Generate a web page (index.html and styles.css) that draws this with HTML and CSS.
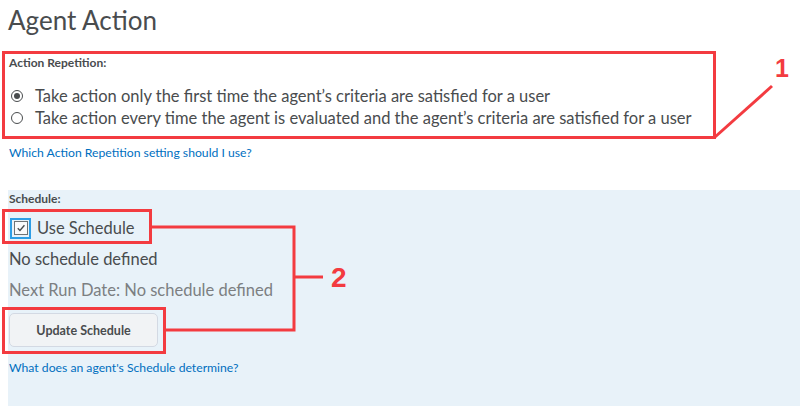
FILE: index.html
```html
<!DOCTYPE html>
<html lang="en">
<head>
<meta charset="utf-8">
<title>Agent Action</title>
<link rel="stylesheet" href="styles.css">
</head>
<body>
<div class="page">
  <h1 class="title">Agent Action</h1>

  <section class="repetition">
    <div class="label">Action Repetition:</div>
    <div class="options">
      <label class="option"><span class="radio checked"></span><span>Take action only the first time the agent’s criteria are satisfied for a user</span></label>
      <label class="option"><span class="radio"></span><span>Take action every time the agent is evaluated and the agent’s criteria are satisfied for a user</span></label>
    </div>
    <a class="help-link" href="#">Which Action Repetition setting should I use?</a>
  </section>

  <section class="schedule">
    <div class="label">Schedule:</div>
    <label class="check-row">
      <span class="focus-ring"><span class="checkbox">
        <svg viewBox="0 0 14 14" width="14" height="14"><path d="M3.2 7.2 L5.8 9.8 L11 3.8" fill="none" stroke="#494c4e" stroke-width="1.6"/></svg>
      </span></span>
      <span>Use Schedule</span>
    </label>
    <div class="status">No schedule defined</div>
    <div class="next-run">Next Run Date: No schedule defined</div>
    <button class="btn" type="button">Update Schedule</button>
    <a class="help-link" href="#">What does an agent's Schedule determine?</a>
  </section>

  <svg class="annotations" width="800" height="407" viewBox="0 0 800 407">
    <g fill="none" stroke="#f33b40" stroke-width="3">
      <rect x="3.5" y="52.5" width="711" height="85"/>
      <path d="M715 137 L772 86"/>
      <rect x="3.5" y="210.5" width="147" height="32"/>
      <rect x="3.5" y="308.5" width="161" height="44"/>
      <path d="M151 227 H294 V330 H165 M294 277 H323"/>
    </g>
    <text x="775" y="77" class="num">1</text>
    <text x="331" y="287" class="num num2">2</text>
  </svg>
</div>
</body>
</html>
```

FILE: styles.css
```css
html, body {
  margin: 0;
  padding: 0;
  background: #ffffff;
}

body {
  font-family: Lato, "Open Sans", "Liberation Sans", sans-serif;
  color: #494c4e;
}

.page {
  position: relative;
  width: 800px;
  height: 407px;
  overflow: hidden;
}

.title {
  margin: 0;
  padding: 5px 0 0 8px;
  font-size: 26px;
  font-weight: 400;
  line-height: 30px;
}

.repetition {
  padding: 20px 0 0 9px;
}

.label {
  font-size: 12px;
  font-weight: 700;
  line-height: 16px;
}

.options {
  margin-top: 14px;
  display: flex;
  flex-direction: column;
}

.option {
  display: flex;
  align-items: center;
  gap: 12px;
  font-size: 16.5px;
  line-height: 22px;
  height: 22px;
  padding-left: 2px;
}

.radio {
  width: 12px;
  height: 12px;
  border: 1px solid #494c4e;
  border-radius: 50%;
  box-sizing: border-box;
  position: relative;
  flex: none;
}

.radio.checked::after {
  content: "";
  position: absolute;
  left: 2px;
  top: 2px;
  width: 6px;
  height: 6px;
  border-radius: 50%;
  background: #494c4e;
}

.help-link {
  display: block;
  margin-top: 16px;
  font-size: 12.2px;
  line-height: 16px;
  color: #006fbf;
  text-decoration: none;
}

.schedule {
  margin: 29px 0 0 8px;
  height: 216px;
  background: #e8f2f9;
  padding: 0 0 0 1px;
}

.schedule .label {
  padding-top: 1px;
}

.check-row {
  display: flex;
  align-items: center;
  gap: 6px;
  margin-top: 10px;
  font-size: 16.5px;
  line-height: 22px;
}

.focus-ring {
  width: 21px;
  height: 21px;
  box-sizing: border-box;
  border: 2px solid #2d9ee6;
  display: flex;
  align-items: center;
  justify-content: center;
  margin-left: 1px;
}

.checkbox {
  width: 14px;
  height: 14px;
  box-sizing: border-box;
  border: 1px solid #6e7376;
  background: #f9fafb;
  display: flex;
  align-items: center;
  justify-content: center;
}

.checkbox svg {
  display: block;
}

.status {
  margin-top: 9px;
  font-size: 16.5px;
  line-height: 22px;
}

.next-run {
  margin-top: 9px;
  font-size: 16.5px;
  line-height: 22px;
  color: #7c7f82;
}

.btn {
  display: block;
  margin-top: 12px;
  width: 149px;
  height: 34px;
  background: #f1f3f5;
  border: 1px solid #d3d9e3;
  border-radius: 5px;
  font-family: Lato, "Open Sans", "Liberation Sans", sans-serif;
  font-size: 12.5px;
  font-weight: 700;
  color: #494c4e;
  padding: 0;
}

.schedule .help-link {
  margin-top: 13px;
}

.annotations {
  position: absolute;
  left: 0;
  top: 0;
  pointer-events: none;
}

.num {
  font-family: "Liberation Sans", Arial, sans-serif;
  font-weight: 700;
  font-size: 25px;
  fill: #f33b40;
}

.num2 {
  font-size: 28px;
}
```
